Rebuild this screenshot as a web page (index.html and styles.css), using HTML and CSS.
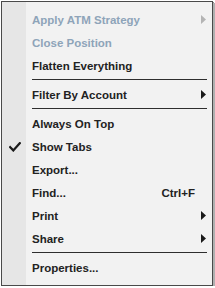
FILE: index.html
```html
<!DOCTYPE html>
<html>
<head>
<meta charset="utf-8">
<link rel="stylesheet" href="styles.css">
</head>
<body>
<div class="menu">
  <div class="item disabled"><span class="check"></span><span class="label">Apply ATM Strategy</span><span class="arrow"><svg width="5" height="9" viewBox="0 0 5 9"><path d="M0 0 L5 4.5 L0 9 Z" fill="#b4b4b4"/></svg></span></div>
  <div class="item disabled"><span class="check"></span><span class="label">Close Position</span><span class="arrow"></span></div>
  <div class="item"><span class="check"></span><span class="label">Flatten Everything</span><span class="arrow"></span></div>
  <div class="sep"></div>
  <div class="item"><span class="check"></span><span class="label">Filter By Account</span><span class="arrow"><svg width="5" height="9" viewBox="0 0 5 9"><path d="M0 0 L5 4.5 L0 9 Z" fill="#1a1a1a"/></svg></span></div>
  <div class="sep"></div>
  <div class="item"><span class="check"></span><span class="label">Always On Top</span><span class="arrow"></span></div>
  <div class="item"><span class="check"><svg width="12" height="10" viewBox="0 0 12 10"><path d="M1.2 5.2 L4.3 8.4 L10.8 1.2" fill="none" stroke="#1a1a1a" stroke-width="2.3" stroke-linecap="square" stroke-linejoin="miter"/></svg></span><span class="label">Show Tabs</span><span class="arrow"></span></div>
  <div class="item"><span class="check"></span><span class="label">Export...</span><span class="arrow"></span></div>
  <div class="item"><span class="check"></span><span class="label">Find...</span><span class="shortcut">Ctrl+F</span><span class="arrow"></span></div>
  <div class="item"><span class="check"></span><span class="label">Print</span><span class="arrow"><svg width="5" height="9" viewBox="0 0 5 9"><path d="M0 0 L5 4.5 L0 9 Z" fill="#1a1a1a"/></svg></span></div>
  <div class="item"><span class="check"></span><span class="label">Share</span><span class="arrow"><svg width="5" height="9" viewBox="0 0 5 9"><path d="M0 0 L5 4.5 L0 9 Z" fill="#1a1a1a"/></svg></span></div>
  <div class="sep"></div>
  <div class="item"><span class="check"></span><span class="label">Properties...</span><span class="arrow"></span></div>
</div>
</body>
</html>
```

FILE: styles.css
```css
html, body {
  margin: 0;
  padding: 0;
  background: #ffffff;
}
body {
  font-family: "Liberation Sans", Arial, sans-serif;
}
.menu {
  box-sizing: border-box;
  margin: 1px 0 0 1px;
  width: 212px;
  height: 285px;
  border: 1px solid #4a4a4a;
  padding: 6px 0 5px 0;
  background: linear-gradient(to right, #e6e6e6 0, #e6e6e6 24px, #f2f2f2 24px);
  box-shadow: 2px 2px 0 #b0b0b0, 1px 1px 0 #8c8c8c;
  display: flex;
  flex-direction: column;
}
.item {
  display: flex;
  align-items: center;
  height: 23px;
  padding-right: 6px;
  font-size: 11.5px;
  font-weight: bold;
  color: #222222;
}
.item.disabled {
  color: #8ea4b9;
}
.check {
  width: 30px;
  height: 23px;
  display: flex;
  align-items: center;
  padding-left: 7px;
  box-sizing: border-box;
}
.check svg {
  display: block;
}
.label {
  flex: 1;
  white-space: nowrap;
}
.shortcut {
  white-space: nowrap;
}
.arrow {
  width: 5px;
  margin-left: 6px;
  display: flex;
  align-items: center;
}
.arrow svg {
  display: block;
}
.sep {
  height: 6px;
  box-sizing: border-box;
  padding-top: 2px;
  margin: 0 5px 0 30px;
}
.sep::before {
  content: "";
  display: block;
  height: 1px;
  background: #2e2e2e;
}
```
